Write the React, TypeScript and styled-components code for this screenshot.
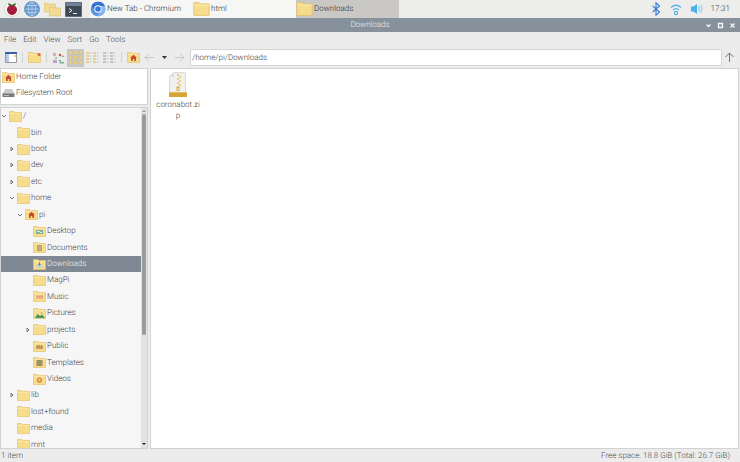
import React from "react";
import styled, { createGlobalStyle, css } from "styled-components";

const GlobalStyle = createGlobalStyle`
  *, *::before, *::after { box-sizing: border-box; }
  body { margin: 0; background: #ececec; text-rendering: geometricPrecision; }
  button, input { font: inherit; color: inherit; text-rendering: inherit; }
  button { border: 0; padding: 0; background: none; }
  svg { display: block; flex: none; }
`;

const Screen = styled.div`
  display: flex;
  flex-direction: column;
  height: 100vh;
  overflow: hidden;
  font: 300 8px/16px Roboto, "Liberation Sans", sans-serif;
  color: #404245;
  background: #ececec;
`;

const Taskbar = styled.header`
  display: flex;
  flex: none;
  height: 18px;
  background: #ededeb;
`;

const Launchers = styled.div`
  display: flex;
  align-items: center;
  gap: 4px;
  width: 90px;
  padding-left: 4px;
`;

const Launcher = styled.button`
  display: flex;
`;

const Tasks = styled.nav`
  display: flex;
  flex: 1;
`;

const Task = styled.button<{ $active?: boolean }>`
  display: flex;
  align-items: center;
  width: 103px;
  gap: 1px;
  overflow: hidden;
  color: #2c2e30;
  white-space: nowrap;
  background: ${(p) => (p.$active ? "#cac8c4" : "#f6f6f5")};
`;

const Tray = styled.div`
  display: flex;
  align-items: center;
  gap: 8px;
  padding-right: 10px;
`;

const TitleBar = styled.div`
  display: grid;
  grid-template-columns: 1fr auto 1fr;
  align-items: center;
  flex: none;
  height: 14px;
  color: #eceef0;
  background: #87919b;
`;

const Title = styled.h1`
  grid-column: 2;
  margin: 0;
  font: inherit;
  line-height: 14px;
`;

const WindowButtons = styled.div`
  display: flex;
  justify-content: flex-end;
  gap: 3px;
  padding-right: 3px;
`;

const MenuBar = styled.nav`
  display: flex;
  flex: none;
  gap: 7px;
  height: 16px;
  padding-left: 4px;
  color: #4a4c4f;
`;

const ToolBar = styled.div`
  display: flex;
  align-items: center;
  flex: none;
  height: 19px;
  padding: 0 3px 0 2px;
`;

const Tool = styled.button<{ $on?: boolean }>`
  display: flex;
  align-items: center;
  justify-content: center;
  width: 17px;
  height: 18px;
  background: ${(p) => (p.$on ? "#c6c6c5" : "none")};
`;

const Arrow = styled(Tool)`
  width: 15px;
`;

const Divider = styled.span`
  width: 1px;
  height: 11px;
  margin: 0 3px;
  background: #d4d4d4;
`;

const PathInput = styled.input`
  flex: 1;
  min-width: 0;
  height: 17px;
  margin-left: 3px;
  padding: 0 1px;
  border: 1px solid #d5d5d5;
  border-radius: 1px;
  outline: 0;
  background: #fff;
`;

const Body = styled.main`
  display: flex;
  flex: 1;
  min-height: 0;
  gap: 2px;
  padding-right: 1px;
  padding-top: 1px;
`;

const Sidebar = styled.aside`
  display: flex;
  flex-direction: column;
  flex: none;
  width: 148px;
  gap: 2px;
`;

const panel = css`
  border: 1px solid #d2d2d2;
`;

const Places = styled.div`
  ${panel}
  flex: none;
  padding-bottom: 3px;
  background: #fff;
`;

const Place = styled.button`
  display: flex;
  align-items: center;
  gap: 1px;
  width: 100%;
  height: 16px;
  padding-left: 1px;
`;

const TreePanel = styled.div`
  ${panel}
  display: flex;
  flex: 1;
  min-height: 0;
  overflow: hidden;
  background: #f6f6f6;
`;

const Tree = styled.ul`
  display: grid;
  grid-auto-rows: minmax(16px, 1fr);
  flex: 1;
  margin: 0 0 -5px;
  padding: 0;
  list-style: none;
`;

const TreeRow = styled.li<{ $depth: number; $selected?: boolean }>`
  display: flex;
  align-items: center;
  padding-left: ${(p) => p.$depth * 8}px;
  ${(p) => p.$selected && css`
    color: #f3f4f5;
    background: #7f8993;
  `}
`;

const Expander = styled.span`
  display: flex;
  width: 8px;
  color: #747474;
`;

const RowLabel = styled.span`
  margin-left: 1px;
`;

const ScrollTrack = styled.div`
  display: flex;
  flex-direction: column;
  align-items: center;
  flex: none;
  width: 6px;
  background: #e2e2e2;
`;

const ScrollThumb = styled.div`
  flex: 0 1 65%;
  width: 4px;
  margin-bottom: auto;
  border-radius: 2px;
  background: #999b9d;
`;

const Files = styled.section`
  ${panel}
  flex: 1;
  min-width: 0;
  background: #fff;
`;

const FileItem = styled.button`
  display: flex;
  flex-direction: column;
  align-items: center;
  width: 54px;
  padding-top: 3px;
  line-height: 11px;
`;

const FileName = styled.span`
  width: 46px;
  margin-top: 1px;
  word-break: break-all;
`;

const StatusBar = styled.footer`
  display: flex;
  justify-content: space-between;
  flex: none;
  height: 13px;
  padding: 0 10px 0 1px;
  line-height: 14px;
  color: #4a4c4f;
`;

type Badge = "home" | "desktop" | "documents" | "downloads" | "music" | "pictures" | "public" | "templates" | "videos" | "new";

const badges: Record<Badge, React.ReactNode> = {
  home: <path d="m6.5 2.8 3.3 3H9V9H7.3V7H5.7v2H4V5.8h-.8z" fill="#c84a32" />,
  desktop: <><path d="M3 4h7v4H3z" fill="#7fb3a4" /><path d="M4 5h3v1H4zM7 6h2v1H7z" fill="#e3ecdf" /></>,
  documents: <><path d="M4 3h5v6H4z" fill="#b09e6c" /><path d="M4 4.5h5M4 6h5M4 7.5h5" stroke="#d8c68e" strokeWidth=".5" /></>,
  downloads: <><path d="M3 6h7v3H3z" fill="#ccd4c4" /><path d="M6 3h1v2h1L6.500 7 5 5h1z" fill="#4c87b4" /></>,
  music: <><path d="M3 4h7v4H3z" fill="#f0c08e" /><path d="M4 7.500V5l1.200 1.500L6.500 5v2.500M8 7.500V5h1.500v2.500" fill="none" stroke="#dd9a78" strokeWidth=".8" /></>,
  pictures: <><path d="m2 10 2.500-4L7 8l2-1.500L12 10z" fill="#3f9b62" /><circle cx="8.500" cy="5" r=".8" fill="#d98a4c" /></>,
  public: <><path d="M3 5h7v3H3z" fill="#c79a62" /><path d="M4 4h1v2H4zM6 4h1v2H6zM8 4h1v2H8z" fill="#b77a50" /></>,
  templates: <path d="M3.500 3h6v6h-6z" fill="#9d9364" />,
  videos: <circle cx="6.500" cy="6" r="1.900" fill="none" stroke="#dd8038" strokeWidth="1.400" />,
  new: <circle cx="11" cy="2.500" r="1.500" fill="#dc6545" />,
};

const Folder = ({ badge, width = 13 }: { badge?: Badge; width?: number }) => (
  <svg width={width} height={Math.round(width * 0.85)} viewBox="0 0 13 11" aria-hidden="true">
    <path d="M.5.5h4L6 1.500h6.500v9H.5z" fill="#f7dc8c" stroke="#e5c26c" strokeWidth=".7" />
    <path d="M1 2.500h11" stroke="#fbe8ac" strokeWidth=".8" />
    {badge && badges[badge]}
  </svg>
);

const Raspberry = () => (
  <svg width="16" height="16" viewBox="0 0 16 16">
    <circle cx="8" cy="8" r="7.500" fill="#f8f7f5" stroke="#d6d4d0" strokeWidth=".8" />
    <path d="M7.800 4.800C5 5.500 3.500 3.600 4 2.500c1.900-.4 3.500.2 4 1.700.5-1.500 2.100-2.100 4-1.700.5 1.100-1 3-3.800 2.300z" fill="#437f3c" />
    <path d="M8 4.300c2.700 0 5 1.700 5 4.400C13 11.500 10.200 14 8 14s-5-2.500-5-5.300C3 6 5.300 4.300 8 4.300z" fill="#9c1638" />
    <g fill="#c72f54"><circle cx="6" cy="7" r=".9" /><circle cx="10" cy="7" r=".9" /><circle cx="8" cy="9.500" r="1.100" /><circle cx="5" cy="10" r=".7" /><circle cx="11" cy="10" r=".7" /><circle cx="8" cy="12.500" r=".6" /></g>
  </svg>
);

const Globe = () => (
  <svg width="16" height="16" viewBox="0 0 16 16">
    <circle cx="8" cy="8" r="7.500" fill="#6698d1" stroke="#4e80bc" strokeWidth=".7" />
    <g fill="none" stroke="#c6dbef" strokeWidth=".7"><ellipse cx="8" cy="8" rx="3.500" ry="7" /><path d="M8 1v14M1 8h14M2.500 4.500h11M2.500 11.500h11" /></g>
  </svg>
);

const Folders = () => (
  <svg width="17" height="15" viewBox="0 0 17 15">
    <g fill="#f3da93" stroke="#dcc17a" strokeWidth=".6"><path d="M.5 1h3l1 1h7v8H.5z" /><path d="M5.500 5h3l1 1h7v8h-11z" /></g>
  </svg>
);

const Terminal = () => (
  <svg width="17" height="15" viewBox="0 0 17 15">
    <path d="M.5.500h16v14H.5z" fill="#3f4855" stroke="#606d80" />
    <path d="M1 1h15v3H1z" fill="#718199" />
    <path d="m4 6.500 3 2-3 2M8 11.500h4" fill="none" stroke="#e9edf0" />
  </svg>
);

const Chromium = () => (
  <svg width="16" height="16" viewBox="0 0 16 16">
    <circle cx="8" cy="8" r="7.300" fill="#5b93e3" />
    <path d="M8 .7A7.300 7.300 0 0 1 15 5H8a3.500 3.500 0 0 0-3.200 4L1.500 4.500A7.300 7.300 0 0 1 8 .700z" fill="#3472ce" />
    <path d="M14.800 5a7.300 7.300 0 0 1-7.300 10.300l3.300-5.500A3.500 3.500 0 0 0 9.800 5z" fill="#86b6f4" />
    <circle cx="8" cy="8" r="3.700" fill="#fff" /><circle cx="8" cy="8" r="2.800" fill="#3978d8" />
  </svg>
);

const Bluetooth = () => (
  <svg width="12" height="14" viewBox="0 0 12 16">
    <path d="m2 4.500 8 7L6 15V1l4 3.500-8 7" fill="none" stroke="#3277dc" strokeWidth="1.300" />
  </svg>
);

const Wifi = () => (
  <svg width="12" height="14" viewBox="0 0 12 14" fill="none" stroke="#58b1ea" strokeWidth="1.200">
    <path d="M1 5.500q5-4.500 10 0M3 8q3-2.800 6 0" /><circle cx="6" cy="11" r="1.600" />
  </svg>
);

const Volume = () => (
  <svg width="13" height="12" viewBox="0 0 13 12">
    <path d="M1 3.500h2.500L7 1v10L3.500 8.500H1z" fill="#48afed" />
    <path d="M8.500 3.500q1.500 2.500 0 5M10.500 2q2.500 4 0 8" fill="none" stroke="#a4d6f1" strokeWidth="1.600" />
  </svg>
);

const PanelIcon = () => (
  <svg width="12" height="11" viewBox="0 0 12 11">
    <path d="M.5.500h11v10H.5z" fill="#fff" stroke="#9a9a98" />
    <path d="M0 0h12v2H0z" fill="#3862a5" /><path d="M1 2h3v8H1z" fill="#b7cbe8" /><path d="M9 3h2v2H9z" fill="#e3cf8b" />
  </svg>
);

const squares = [0, 5, 10];
const IconGrid = () => (
  <svg width="13" height="13" viewBox="0 0 13 13">
    {squares.flatMap((x) => squares.map((y) => <path key={`${x}-${y}`} d={`M${x} ${y}h3v3h-3z`} fill="#ecd183" stroke="#d4b96f" strokeWidth=".4" />))}
  </svg>
);

const ThumbIcon = () => (
  <svg width="13" height="12" viewBox="0 0 13 12">
    <path d="M1 1h3v3H1z" fill="#ddb1a6" /><circle cx="8" cy="3" r="1.300" fill="#c75b51" /><path d="m11 3 1.500 2h-3z" fill="#86af89" /><path d="M1 8h4v3H1z" fill="#bca2c3" /><path d="M7 8h2v2h3v1.500H8z" fill="#76ae91" /><circle cx="4" cy="6" r="1" fill="#93b38f" />
  </svg>
);

const ListIcon = ({ grey }: { grey?: boolean }) => (
  <svg width="13" height="12" viewBox="0 0 13 12">
    {[1, 4, 7, 10].map((y) => (
      <g key={y}><path d={`M0 ${y - 1}h3v2H0zM7 ${y - 1}h3v2H7z`} fill={grey ? "#c4c4c4" : "#e6cf94"} /><path d={`M3.500 ${y}h2M10.500 ${y}h2`} stroke="#cacaca" /></g>
    ))}
  </svg>
);

const ArrowIcon = ({ turn = 0, color = "#c6c6c6" }: { turn?: number; color?: string }) => (
  <svg width="11" height="11" viewBox="0 0 11 11">
    <path d="M10 5.500H1M5 1.500l-4 4 4 4" transform={`rotate(${turn} 5.500 5.500)`} fill="none" stroke={color} />
  </svg>
);

const Chevron = ({ open }: { open: boolean }) => (
  <svg width="6" height="6" viewBox="0 0 6 6">
    <path d={open ? "m1 2 2 2 2-2" : "m2 1 2 2-2 2z"} fill="none" stroke="currentColor" />
  </svg>
);

const Drive = () => (
  <svg width="13" height="10" viewBox="0 0 13 10">
    <path d="M3 1h7l2.500 5H.5z" fill="#c9cbcc" /><path d="M.5 5.500h12V9H.5z" fill="#777b7e" /><path d="M2 7.500h5" stroke="#b8bbbd" />
  </svg>
);

const ZipIcon = () => (
  <svg width="20" height="26" viewBox="0 0 20 26">
    <path d="M5.500.500h12v20h-16v-16z" fill="#f0f0ee" stroke="#dadad7" />
    <path d="m1.500 4.500 4-4v4z" fill="#d9d9d6" />
    <path d="M1 20h18v5H1z" fill="#d6a437" /><path d="M1 20h18v1H1z" fill="#e5bd5b" />
    <path d="M9 2h2v2H9zM11 4h2v2h-2zM9 6h2v2H9zM11 8h2v2h-2zM9 10h2v2H9zM11 12h2v2h-2z" fill="#ecca80" />
    <path d="M8.500 14.500h3V19h-3z" fill="#dda944" /><path d="M9.500 16h1v2h-1z" fill="#fff4d6" />
  </svg>
);

const WinIcon = ({ d }: { d: string }) => (
  <svg width="9" height="9" viewBox="0 0 9 9"><path d={d} fill="none" stroke="#f5f6f7" strokeWidth="1.300" /></svg>
);

interface Entry { name: string; depth: number; open?: boolean; badge?: Badge; selected?: boolean }

const entries: Entry[] = [
  { name: "/", depth: 0, open: true },
  { name: "bin", depth: 1 },
  { name: "boot", depth: 1, open: false },
  { name: "dev", depth: 1, open: false },
  { name: "etc", depth: 1, open: false },
  { name: "home", depth: 1, open: true },
  { name: "pi", depth: 2, open: true, badge: "home" },
  { name: "Desktop", depth: 3, badge: "desktop" },
  { name: "Documents", depth: 3, badge: "documents" },
  { name: "Downloads", depth: 3, badge: "downloads", selected: true },
  { name: "MagPi", depth: 3 },
  { name: "Music", depth: 3, badge: "music" },
  { name: "Pictures", depth: 3, badge: "pictures" },
  { name: "projects", depth: 3, open: false },
  { name: "Public", depth: 3, badge: "public" },
  { name: "Templates", depth: 3, badge: "templates" },
  { name: "Videos", depth: 3, badge: "videos" },
  { name: "lib", depth: 1, open: false },
  { name: "lost+found", depth: 1 },
  { name: "media", depth: 1 },
  { name: "mnt", depth: 1 },
];

export default function App() {
  return (
    <Screen>
      <GlobalStyle />
      <Taskbar>
        <Launchers>
          <Launcher aria-label="Menu"><Raspberry /></Launcher>
          <Launcher aria-label="Web browser"><Globe /></Launcher>
          <Launcher aria-label="File manager"><Folders /></Launcher>
          <Launcher aria-label="Terminal"><Terminal /></Launcher>
        </Launchers>
        <Tasks aria-label="Open windows">
          <Task><Chromium />New Tab - Chromium</Task>
          <Task><Folder width={17} />html</Task>
          <Task $active><Folder width={17} />Downloads</Task>
        </Tasks>
        <Tray>
          <Bluetooth /><Wifi /><Volume /><time>17:31</time>
        </Tray>
      </Taskbar>
      <TitleBar>
        <Title>Downloads</Title>
        <WindowButtons>
          <button aria-label="Minimize"><WinIcon d="m2.500 3.500 2 2 2-2" /></button>
          <button aria-label="Maximize"><WinIcon d="M2.500 2.500h4v4h-4z" /></button>
          <button aria-label="Close"><WinIcon d="m2.500 2.500 4 4m0-4-4 4" /></button>
        </WindowButtons>
      </TitleBar>
      <MenuBar aria-label="Menu bar">
        {["File", "Edit", "View", "Sort", "Go", "Tools"].map((m) => <button key={m}>{m}</button>)}
      </MenuBar>
      <ToolBar>
        <Tool aria-label="Side pane"><PanelIcon /></Tool>
        <Divider />
        <Tool aria-label="New folder"><Folder badge="new" /></Tool>
        <Divider />
        <Tool aria-label="Thumbnails"><ThumbIcon /></Tool>
        <Tool aria-label="Icons" $on><IconGrid /></Tool>
        <Tool aria-label="Compact"><ListIcon /></Tool>
        <Tool aria-label="Details"><ListIcon grey /></Tool>
        <Divider />
        <Tool aria-label="Home"><Folder badge="home" /></Tool>
        <Arrow aria-label="Back"><ArrowIcon /></Arrow>
        <Arrow aria-label="History"><svg width="5" height="3" viewBox="0 0 5 3"><path d="M0 0h5L2.500 3z" fill="#333" /></svg></Arrow>
        <Arrow aria-label="Forward"><ArrowIcon turn={180} /></Arrow>
        <PathInput aria-label="Location" defaultValue="/home/pi/Downloads" />
        <Arrow aria-label="Parent folder"><ArrowIcon turn={90} color="#777" /></Arrow>
      </ToolBar>
      <Body>
        <Sidebar>
          <Places>
            <Place><Folder badge="home" />Home Folder</Place>
            <Place><Drive />Filesystem Root</Place>
          </Places>
          <TreePanel>
            <Tree>
              {entries.map((e) => (
                <TreeRow key={e.name} $depth={e.depth} $selected={e.selected}>
                  <Expander>{e.open !== undefined && <Chevron open={e.open} />}</Expander>
                  <Folder badge={e.badge} />
                  <RowLabel>{e.name}</RowLabel>
                </TreeRow>
              ))}
            </Tree>
            <ScrollTrack>
              <svg width="6" height="6" viewBox="0 0 6 6"><path d="M1 4h4L3 2z" fill="#999" /></svg>
              <ScrollThumb />
              <svg width="6" height="8" viewBox="0 0 6 8"><path d="M1 3h4L3 5z" fill="#222" /></svg>
            </ScrollTrack>
          </TreePanel>
        </Sidebar>
        <Files>
          <FileItem><ZipIcon /><FileName>coronabot.zip</FileName></FileItem>
        </Files>
      </Body>
      <StatusBar><span>1 item</span><span>Free space: 18.8 GiB (Total: 26.7 GiB)</span></StatusBar>
    </Screen>
  );
}
